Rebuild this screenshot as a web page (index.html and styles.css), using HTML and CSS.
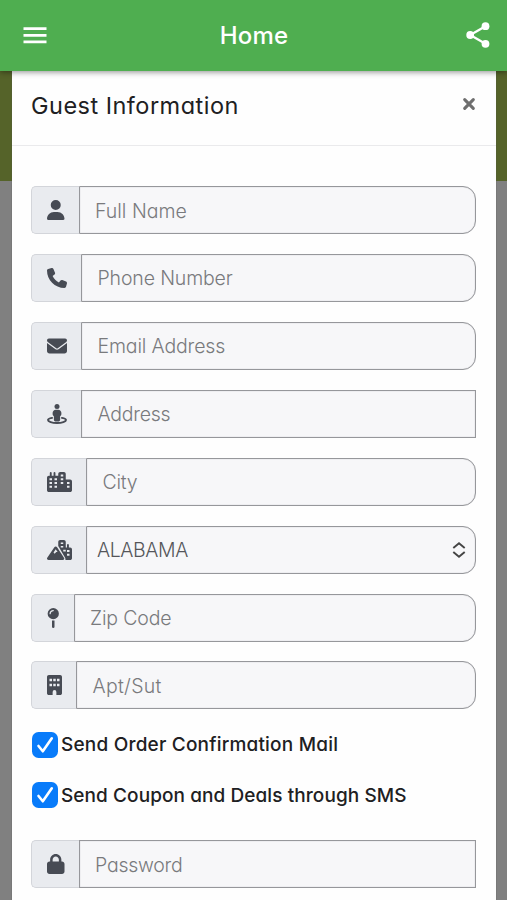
FILE: index.html
```html
<!DOCTYPE html>
<html lang="en">
<head>
<meta charset="utf-8">
<title>Home</title>
<link rel="stylesheet" href="styles.css">
</head>
<body>
<header class="bar">
  <svg class="menu" viewBox="0 0 24 17"><path d="M.5 1.700h23M.5 8.300h23M.5 14.900h23" stroke="#fff" stroke-width="2.700"/></svg>
  <h1 class="t-home">Home</h1>
  <svg class="share" viewBox="0 0 24 26"><path d="M19.500 4.200 4.200 13l15.300 8.800" fill="none" stroke="#fff" stroke-width="2.300"/><g fill="#fff"><circle cx="19.500" cy="4.200" r="3.900"/><circle cx="4.200" cy="13" r="3.900"/><circle cx="19.500" cy="21.800" r="3.900"/></g></svg>
</header>
<div class="backdrop">
<main class="modal">
  <div class="modal-head">
    <h2 class="t-guest">Guest Information</h2>
    <svg class="close" viewBox="0 0 14 14"><path d="m2.700 2.700 8.600 8.600m0-8.600-8.600 8.600" stroke="#6e6e6e" stroke-width="3.100" stroke-linecap="round"/></svg>
  </div>
  <form class="form">
    <div class="fields">
      <div class="group"><span class="addon"><svg viewBox="0 0 448 512"><path d="M224 256A128 128 0 1 0 224 0a128 128 0 1 0 0 256zm-45.700 48C79.800 304 0 383.800 0 482.300C0 498.700 13.300 512 29.700 512H418.300c16.400 0 29.700-13.300 29.700-29.700C448 383.800 368.200 304 269.700 304H178.300z"/></svg></span><div class="input"><span class="t-name">Full Name</span></div></div>
      <div class="group"><span class="addon"><svg viewBox="0 0 512 512"><path d="M164.900 24.600c-7.700-18.600-28-28.500-47.400-23.200l-88 24C12.100 30.200 0 46 0 64C0 311.400 200.600 512 448 512c18 0 33.800-12.100 38.600-29.500l24-88c5.300-19.400-4.600-39.700-23.200-47.400l-96-40c-16.300-6.800-35.200-2.100-46.300 11.600L304.700 368C234.300 334.700 177.300 277.700 144 207.300L193.300 167c13.700-11.200 18.400-30 11.600-46.300l-40-96z"/></svg></span><div class="input"><span class="t-phone">Phone Number</span></div></div>
      <div class="group"><span class="addon"><svg viewBox="0 0 512 512"><path d="M48 64C21.500 64 0 85.500 0 112c0 15.100 7.100 29.300 19.200 38.400L236.800 313.600c11.400 8.500 27 8.500 38.400 0L492.800 150.400c12.100-9.100 19.200-23.300 19.200-38.400c0-26.500-21.500-48-48-48H48zM0 176V384c0 35.300 28.700 64 64 64H448c35.300 0 64-28.700 64-64V176L294.400 339.200c-22.800 17.100-54 17.100-76.800 0L0 176z"/></svg></span><div class="input"><span class="t-email">Email Address</span></div></div>
      <div class="group"><span class="addon"><svg viewBox="0 0 512 512"><circle cx="256" cy="64" r="64"/><path d="M224 144h64c44 0 80 36 80 80v32c0 24-12 44-32 55v89c0 26-22 48-48 48h-64c-26 0-48-22-48-48v-89c-20-11-32-31-32-55v-32c0-44 36-80 80-80z"/><path d="M130 356C72 366 26 384 26 407c0 43 103 79 230 79s230-36 230-79c0-23-46-41-104-51" fill="none" stroke="#474b54" stroke-width="50" stroke-linecap="round"/></svg></span><div class="input square"><span class="t-address">Address</span></div></div>
      <div class="group"><span class="addon"><svg viewBox="0 0 640 512"><path fill-rule="evenodd" d="M72 24a24 24 0 0 1 48 0v72h48V24a24 24 0 0 1 48 0v72h72V48c0-27 21-48 48-48h96c27 0 48 21 48 48v144h112c27 0 48 21 48 48v224c0 27-21 48-48 48H48c-27 0-48-21-48-48V144c0-27 21-48 48-48h24zM64 160v48h64v-48zm128 0v48h64v-48zM64 256v48h64v-48zm128 0v48h64v-48zM64 352v48h64v-48zm128 0v48h64v-48zM352 64v48h64V64zm0 96v48h64v-48zm0 96v48h64v-48zm160 0v48h64v-48zm0 96v48h64v-48z"/></svg></span><div class="input"><span class="t-city">City</span></div></div>
      <div class="group"><span class="addon"><svg viewBox="0 0 640 512"><path fill-rule="evenodd" d="M288 48c0-27 21-48 48-48h96c27 0 48 21 48 48v144h32v-64a24 24 0 0 1 48 0v64h32c27 0 48 21 48 48v224c0 27-21 48-48 48H472c5-19 2-40-9-59L304 180c-4-7-9-13-16-18zM352 64v40h64V64zm0 88v40h64v-40zm64 96v48h64v-48zm96 8v48h64v-48zm0 96v48h64v-48z"/><path fill-rule="evenodd" d="M223 166c15 0 27 7 35 19l180 275c11 18-3 52-27 52H38c-31 0-49-32-32-58l182-269c8-12 20-19 35-19zm0 70-56 84 28 35 43-47h34z"/></svg></span><div class="input select"><span class="t-state">ALABAMA</span><svg class="arrows" viewBox="0 0 14 16"><path d="m1.300 6 5.700-4.700L12.700 6M1.300 10l5.700 4.700 5.700-4.700" fill="none" stroke="#444" stroke-width="1.900"/></svg></div></div>
      <div class="group"><span class="addon"><svg viewBox="0 0 320 512"><path fill-rule="evenodd" d="M16 144a144 144 0 1 1 288 0a144 144 0 1 1-288 0zm144-64a16 16 0 1 0 0-32c-53 0-96 43-96 96a16 16 0 1 0 32 0c0-35 29-64 64-64zm-32 240c20 4 44 4 64 0v160a32 32 0 0 1-64 0z"/></svg></span><div class="input"><span class="t-zip">Zip Code</span></div></div>
      <div class="group"><span class="addon"><svg viewBox="0 0 384 512"><path fill-rule="evenodd" d="M48 0h288c27 0 48 21 48 48v416c0 27-21 48-48 48h-96v-80a48 48 0 0 0-96 0v80H48c-27 0-48-21-48-48V48C0 21 21 0 48 0zm16 96v64h64V96zm96 0v64h64V96zm96 0v64h64V96zM64 224v64h64v-64zm96 0v64h64v-64zm96 0v64h64v-64z"/></svg></span><div class="input"><span class="t-apt">Apt/Sut</span></div></div>
    </div>
    <div class="checks">
      <label class="check"><svg viewBox="0 0 26 26"><rect width="26" height="26" rx="6.500" fill="#087bfa"/><path d="m6.500 14 4.300 5.300 9-13" fill="none" stroke="#fff" stroke-width="2.600" stroke-linecap="round" stroke-linejoin="round"/></svg><span class="t-mail">Send Order Confirmation Mail</span></label>
      <label class="check"><svg viewBox="0 0 26 26"><rect width="26" height="26" rx="6.500" fill="#087bfa"/><path d="m6.500 14 4.300 5.300 9-13" fill="none" stroke="#fff" stroke-width="2.600" stroke-linecap="round" stroke-linejoin="round"/></svg><span class="t-sms">Send Coupon and Deals through SMS</span></label>
    </div>
    <div class="group"><span class="addon"><svg viewBox="0 0 448 512"><path d="M144 144v48H304V144c0-44.200-35.800-80-80-80s-80 35.800-80 80zM80 192V144C80 64.500 144.500 0 224 0s144 64.500 144 144v48h16c35.300 0 64 28.700 64 64V448c0 35.300-28.700 64-64 64H64c-35.300 0-64-28.700-64-64V256c0-35.300 28.700-64 64-64H80z"/></svg></span><div class="input square"><span class="t-pass">Password</span></div></div>
  </form>
</main>
</div>
</body>
</html>
```
FILE: styles.css
```css
* { box-sizing: border-box; }
html, body { height: 100%; }
body {
  margin: 0;
  overflow: hidden;
  display: flex;
  flex-direction: column;
  font-family: Inter, "Liberation Sans", sans-serif;
  font-feature-settings: "cv11";
  color: #202022;
  background: #808080;
}
svg { display: block; flex: none; }
h1, h2 { margin: 0; white-space: nowrap; }

.bar {
  position: relative;
  z-index: 1;
  flex: none;
  height: 70.500px;
  padding: 0 17px 0 23px;
  display: flex;
  align-items: center;
  justify-content: space-between;
  background: #4fae50;
  color: #fff;
  box-shadow: 0 1px 6px rgba(0, 0, 0, .45);
}
.bar h1 { font-size: 24px; font-weight: 500; letter-spacing: .2px; margin-right: 5px; }
.menu { width: 24px; height: 17px; }
.share { width: 24px; height: 26px; }

.backdrop {
  flex: 1;
  min-height: 0;
  padding: 0 11px 0 12px;
  background: linear-gradient(#556329 110.500px, #808080 110.500px);
}
.modal { height: 100%; background: #fefefe; box-shadow: 0 0 1px #555; }
.modal-head {
  height: 75.500px;
  padding: 0 20px 5px 19px;
  display: flex;
  align-items: center;
  justify-content: space-between;
  border-bottom: 1.500px solid #eaeaec;
}
.modal-head h2 { font-size: 23.500px; font-weight: 400; letter-spacing: .48px; }
.close { width: 14px; height: 14px; margin-top: -3px; }

.form { padding: 40px 20px 0 19px; }
.fields { display: flex; flex-direction: column; gap: 19.930px; }
.group { height: 48px; display: flex; }
.addon {
  display: flex;
  align-items: center;
  padding: 0 14px 0 15px;
  background: #e9ebef;
  border: 1px solid #d3d5da;
  border-right: 0;
  border-radius: 5px 0 0 5px;
}
.addon svg { height: 20px; width: auto; fill: #474b54; }
.input {
  flex: 1;
  display: flex;
  align-items: center;
  padding: 1px 15px 0 15.500px;
  background: #f7f7f9;
  border: 1px solid #96979b;
  border-radius: 0 13px 13px 0;
  box-shadow: inset 0 0 1px #a3a4a8;
  font-size: 19.500px;
  font-weight: 300;
  color: #797a7d;
  white-space: nowrap;
}
.square { border-radius: 0; }
.select { padding: 1px 9px 0 10px; justify-content: space-between; color: #55565a; }
.arrows { width: 14px; height: 16px; }
.t-phone, .t-email, .t-zip { letter-spacing: -.15px; }
.t-address, .t-city, .t-pass { letter-spacing: -.25px; }
.t-state { letter-spacing: -.4px; }
.t-apt { letter-spacing: .3px; }

.checks { display: flex; flex-direction: column; gap: 24.500px; padding: 22.500px 0 31.700px 1px; }
.check {
  display: flex;
  align-items: center;
  gap: 3px;
  height: 26px;
  font-size: 19px;
  font-weight: 500;
  white-space: nowrap;
}
.check svg { width: 26px; height: 26px; }
.t-mail { letter-spacing: .2px; }
.t-sms { letter-spacing: .08px; }
```
